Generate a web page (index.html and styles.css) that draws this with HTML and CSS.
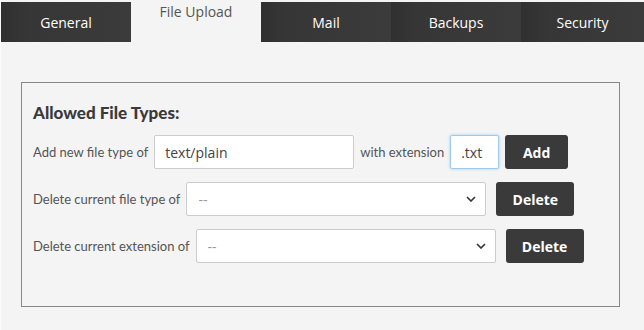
FILE: index.html
```html
<!DOCTYPE html>
<html lang="en">
<head>
  <meta charset="UTF-8">
  <title>Settings - File Upload</title>
  <link rel="stylesheet" href="styles.css">
</head>
<body>
  <!-- Settings tabs -->
  <nav class="tabs">
    <a class="tab" href="#">General</a>
    <a class="tab active" href="#">File Upload</a>
    <a class="tab" href="#">Mail</a>
    <a class="tab" href="#">Backups</a>
    <a class="tab" href="#">Security</a>
  </nav>

  <div class="content">
    <fieldset class="file-types">
      <h2>Allowed File Types:</h2>

      <div class="form-row">
        <label for="mimeInput">Add new file type of</label>
        <input type="text" id="mimeInput" class="mime-input" value="text/plain">
        <label for="extInput">with extension</label>
        <input type="text" id="extInput" class="ext-input focused" value=".txt">
        <button class="btn">Add</button>
      </div>

      <div class="form-row">
        <label for="typeSelect">Delete current file type of</label>
        <div class="select-wrap">
          <select id="typeSelect"><option>--</option></select>
          <svg class="chevron" viewBox="0 0 10 6" width="10" height="6"><path d="M1 1l4 4 4-4" fill="none" stroke="#333" stroke-width="1.6"/></svg>
        </div>
        <button class="btn btn-delete">Delete</button>
      </div>

      <div class="form-row">
        <label for="extSelect">Delete current extension of</label>
        <div class="select-wrap">
          <select id="extSelect"><option>--</option></select>
          <svg class="chevron" viewBox="0 0 10 6" width="10" height="6"><path d="M1 1l4 4 4-4" fill="none" stroke="#333" stroke-width="1.6"/></svg>
        </div>
        <button class="btn btn-delete">Delete</button>
      </div>
    </fieldset>
  </div>
</body>
</html>
```

FILE: styles.css
```css
* {
  margin: 0;
  padding: 0;
  box-sizing: border-box;
}

body {
  font-family: 'Lato', 'Open Sans', sans-serif;
  background: #f4f4f4;
  color: #555;
  border-left: 1px solid #fafafa;
  min-height: 100vh;
}

/* Tabs */
.tabs {
  display: flex;
  padding-top: 2px;
}

.tab {
  width: 130px;
  height: 40px;
  display: flex;
  justify-content: center;
  align-items: center;
  font-family: 'Open Sans', sans-serif;
  font-size: 14px;
  color: #fff;
  text-decoration: none;
  background: linear-gradient(90deg, #303030 0%, #363636 20%, #3b3b3b 100%);
}

.tab:last-child {
  flex: 1;
}

.tab.active {
  background: #f4f4f4;
  color: #555;
  align-items: flex-start;
  padding-top: 0;
}

/* Content */
.content {
  padding: 40px 24px 0 20px;
}

.file-types {
  border: 1px solid #888;
  padding: 19px 11px 40px;
  height: 225px;
}

.file-types h2 {
  font-size: 17px;
  font-weight: 900;
  color: #3a3a3a;
  margin-bottom: 12px;
}

.form-row {
  display: flex;
  align-items: center;
  margin-bottom: 13px;
  font-size: 13px;
}

.form-row label {
  margin-right: 6px;
}

.form-row input {
  height: 34px;
  border: 1px solid #ccc;
  border-radius: 2px;
  background: #fff;
  font-family: 'Open Sans', sans-serif;
  font-size: 14px;
  color: #444;
  padding: 0 10px;
  margin-right: 6px;
}

.mime-input {
  width: 200px;
}

.ext-input {
  width: 49px;
}

.ext-input.focused {
  border-color: #9ecaed;
  box-shadow: 0 0 3px #9ecaed;
  outline: none;
}

.select-wrap {
  position: relative;
  margin-right: 10px;
}

.select-wrap select {
  width: 300px;
  height: 34px;
  border: 1px solid #ccc;
  border-radius: 2px;
  background: #fff;
  appearance: none;
  font-family: 'Open Sans', sans-serif;
  font-size: 14px;
  color: #999;
  padding: 0 11px;
}

.chevron {
  position: absolute;
  right: 10px;
  top: 14px;
  pointer-events: none;
}

.btn {
  height: 34px;
  width: 63px;
  border: none;
  border-radius: 3px;
  background: #3a3a3a;
  color: #fff;
  font-family: 'Open Sans', sans-serif;
  font-weight: 700;
  font-size: 14px;
  cursor: pointer;
}

.btn-delete {
  width: 78px;
}
```
